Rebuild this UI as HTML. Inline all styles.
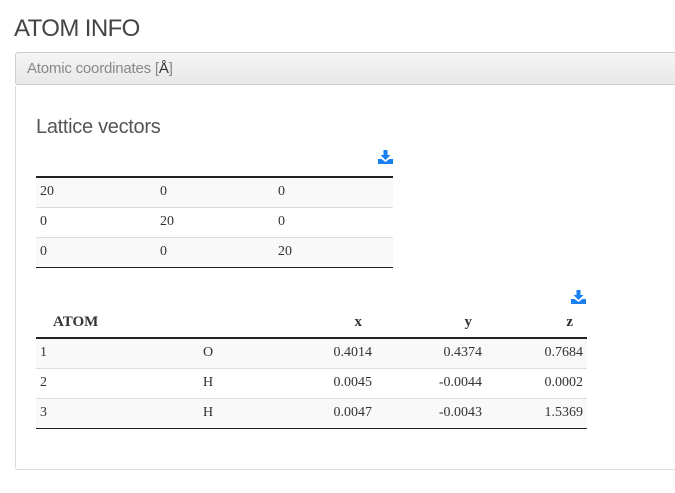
<!DOCTYPE html>
<html><head><meta charset="utf-8"><style>
*{margin:0;padding:0;box-sizing:border-box}
body{width:675px;height:493px;overflow:hidden;background:#fff;font-family:"Liberation Sans",sans-serif;color:#333;position:relative}
.abs{position:absolute}
h1{position:absolute;left:14px;top:15px;font-size:24px;font-weight:300;color:#444;letter-spacing:-0.6px}
.ph{position:absolute;left:15px;top:52px;width:680px;height:33px;border:1px solid #ccc;border-radius:3px 0 0 3px;background:linear-gradient(#f5f5f5,#e8e8e8);font-size:15px;color:#888;padding:7px 11px;letter-spacing:-0.2px}
.ph b{color:#333;font-weight:normal}
.pb{position:absolute;left:15px;top:86px;width:680px;height:384px;border:1px solid #ddd;border-top:none;border-right:none;border-radius:0 0 0 3px}
h3{position:absolute;left:36px;top:116px;font-size:20px;font-weight:300;color:#555;letter-spacing:-0.3px}
table{position:absolute;border-collapse:collapse;font-family:"Liberation Serif",serif;font-size:14px;color:#333}
td,th{height:30px;padding:0 4px;border-top:1px solid #ddd}
tr.s td{background:#f9f9f9}
.t1{left:36px;top:176px;width:357px;border-top:2px solid #222;border-bottom:1px solid #222}
.t1 tr:first-child td{border-top:none}
.t2{left:36px;top:308px;width:551px;border-bottom:1px solid #222}
.t2 th{border-top:none;border-bottom:2px solid #222;font-weight:bold;height:30px;font-size:15px}
.r{text-align:right}
</style></head><body>
<h1>ATOM INFO</h1>
<div class="ph">Atomic coordinates [<b>Å</b>]</div>
<div class="pb"></div>
<h3>Lattice vectors</h3>
<svg class="abs" style="left:378px;top:150px" width="15" height="14" viewBox="0 0 15 14"><path d="M5.5 0h4v5h3l-5 5-5-5h3z" fill="#1a7ff0"/><path d="M0 9h3.5l4 3 4-3H15v5H0z" fill="#1a7ff0"/></svg>
<table class="t1">
<tr class="s"><td style="width:120px">20</td><td style="width:118px">0</td><td>0</td></tr>
<tr><td>0</td><td>20</td><td>0</td></tr>
<tr class="s"><td>0</td><td>0</td><td>20</td></tr>
</table>
<svg class="abs" style="left:571px;top:290px" width="15" height="14" viewBox="0 0 15 14"><path d="M5.5 0h4v5h3l-5 5-5-5h3z" fill="#1a7ff0"/><path d="M0 9h3.5l4 3 4-3H15v5H0z" fill="#1a7ff0"/></svg>
<table class="t2">
<tr><th style="text-align:left;padding-left:17px;width:160px">ATOM</th><th style="width:90px"></th><th style="text-align:right;padding-right:14px;width:90px">x</th><th style="text-align:right;padding-right:14px;width:110px">y</th><th style="text-align:right;padding-right:14px">z</th></tr>
<tr class="s"><td>1</td><td style="text-align:left;padding-left:7px">O</td><td class="r">0.4014</td><td class="r">0.4374</td><td class="r">0.7684</td></tr>
<tr><td>2</td><td style="padding-left:7px">H</td><td class="r">0.0045</td><td class="r">-0.0044</td><td class="r">0.0002</td></tr>
<tr class="s"><td>3</td><td style="padding-left:7px">H</td><td class="r">0.0047</td><td class="r">-0.0043</td><td class="r">1.5369</td></tr>
</table>
</body></html>
